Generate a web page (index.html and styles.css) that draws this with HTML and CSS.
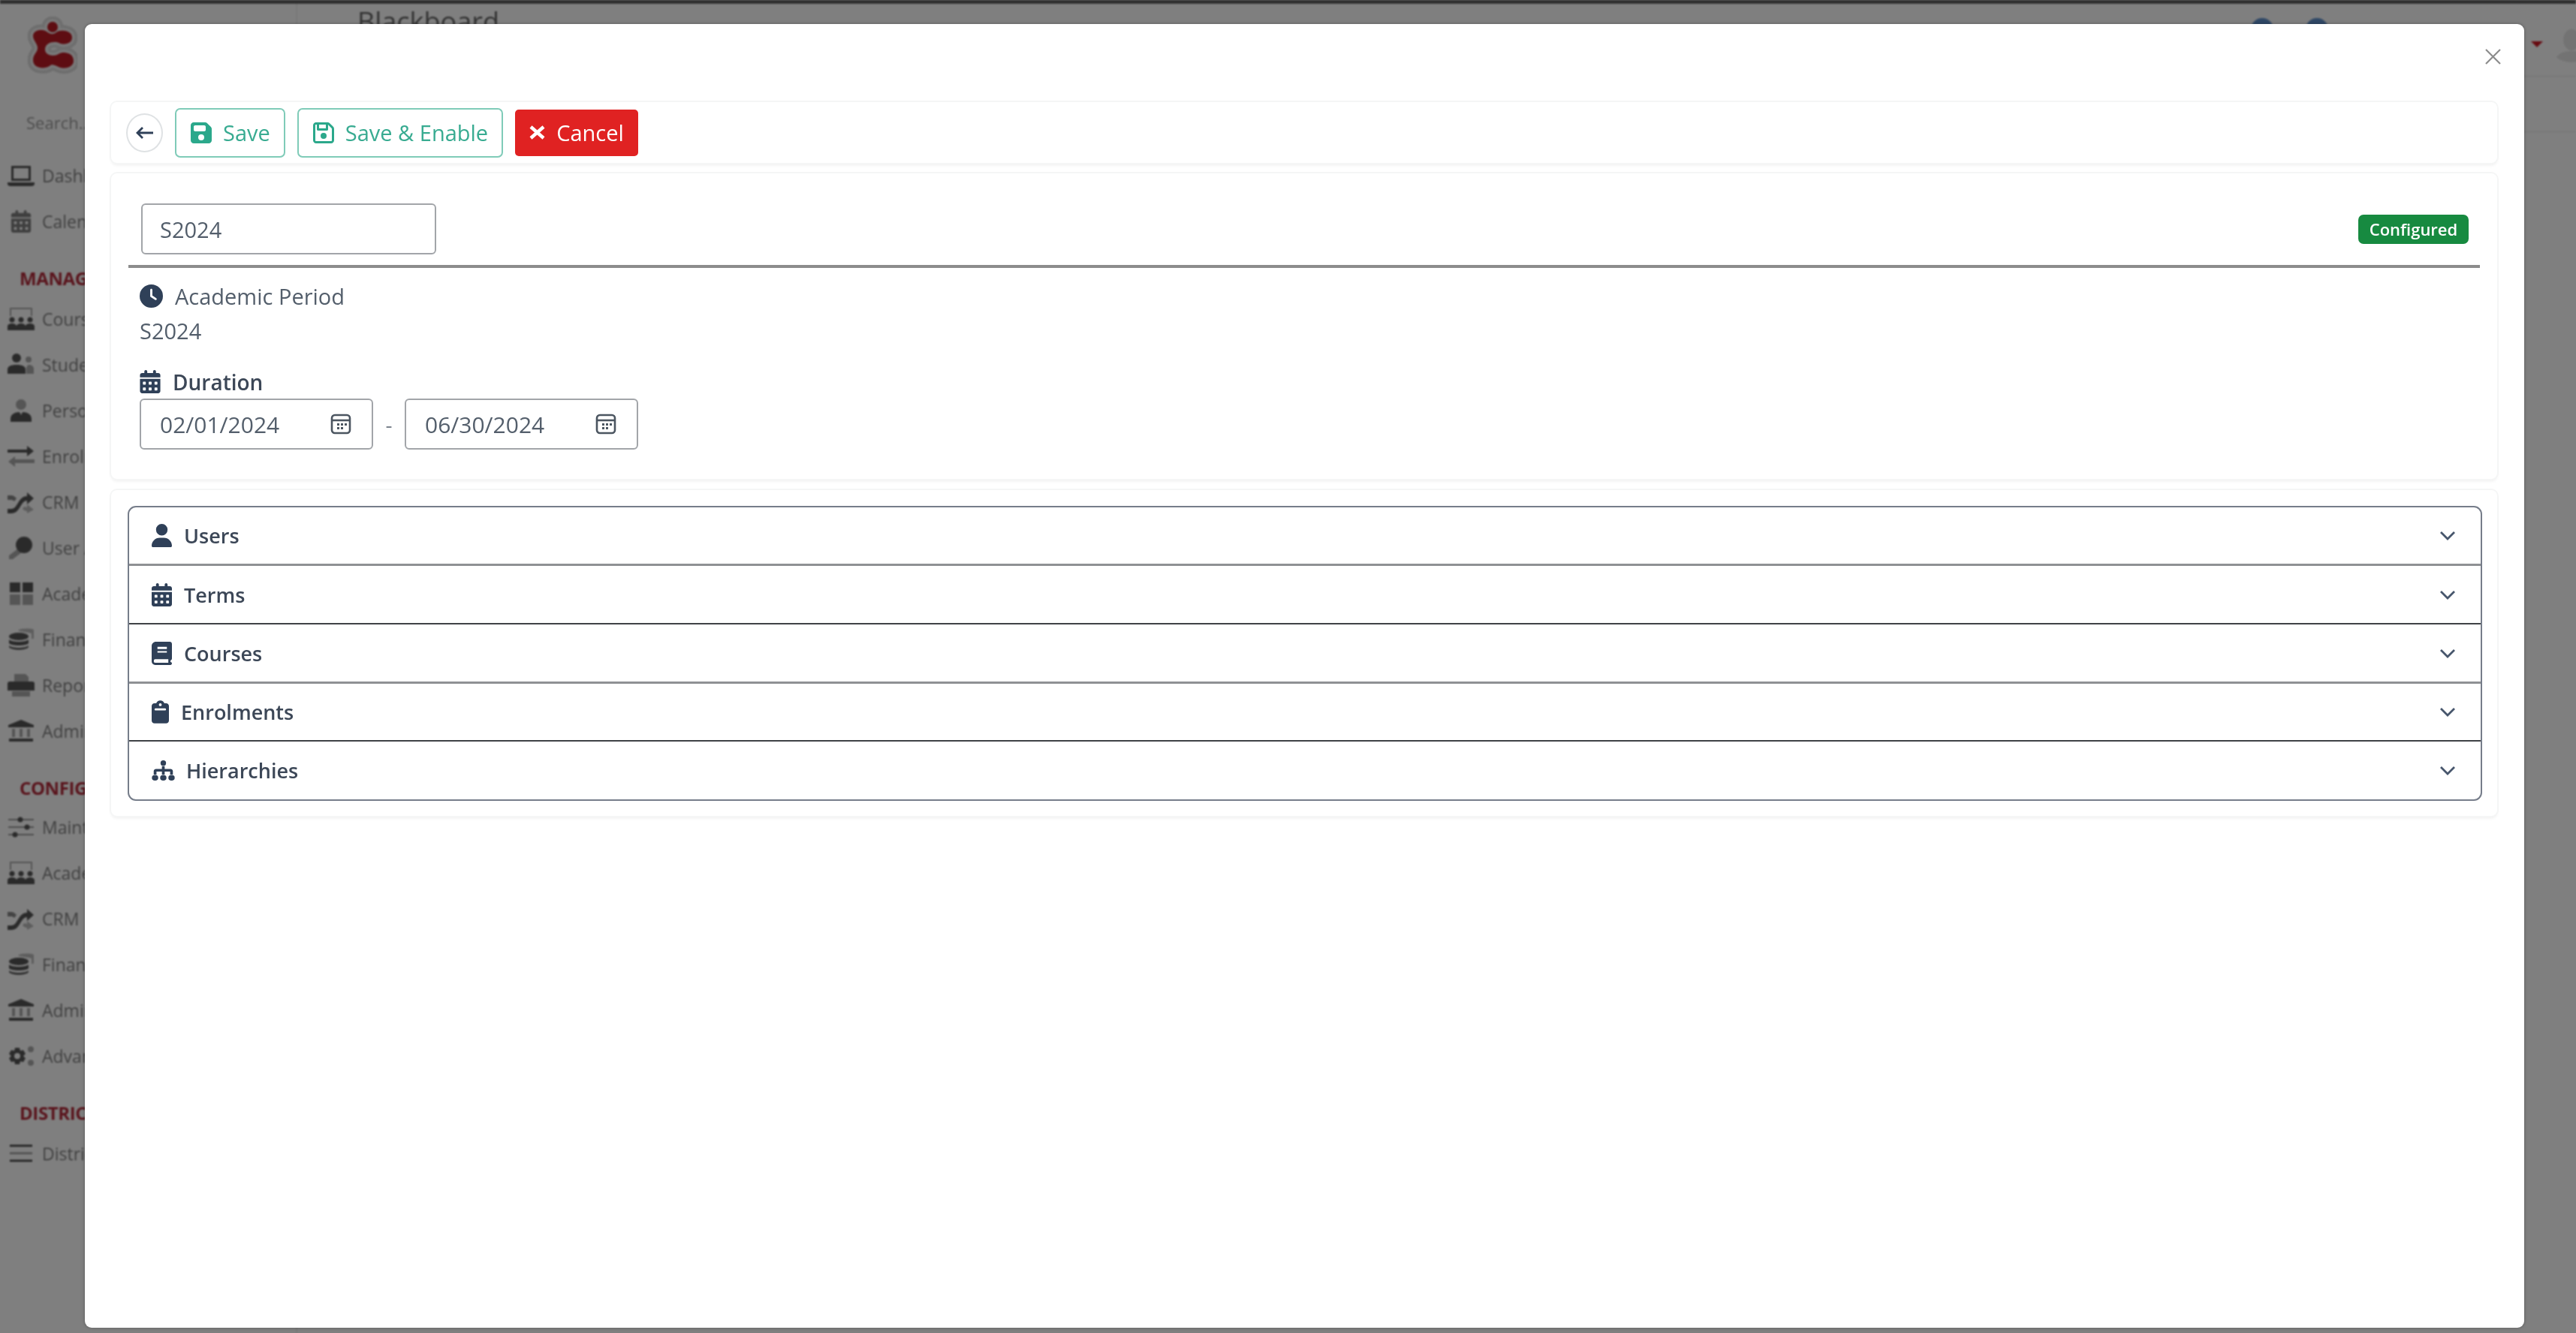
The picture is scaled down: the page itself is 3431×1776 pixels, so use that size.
FILE: index.html
```html
<!DOCTYPE html>
<html lang="en">
<head>
<meta charset="utf-8">
<title>Blackboard – Academic Period</title>
<link rel="stylesheet" href="styles.css">
</head>
<body>
<svg class="defs" aria-hidden="true">
  <symbol id="i-save" viewBox="0 0 448 512"><path d="M64 32C28.7 32 0 60.7 0 96V416c0 35.3 28.7 64 64 64H384c35.3 0 64-28.7 64-64V173.3c0-17-6.7-33.3-18.7-45.3L352 50.7C340 38.7 323.7 32 306.7 32H64zm0 96c0-17.7 14.3-32 32-32H288c17.7 0 32 14.3 32 32v64c0 17.7-14.3 32-32 32H96c-17.7 0-32-14.3-32-32V128zM224 288a64 64 0 1 1 0 128 64 64 0 1 1 0-128z"/></symbol>
  <symbol id="i-save-o" viewBox="0 0 448 512"><path d="M48 96V416c0 8.800 7.200 16 16 16H384c8.800 0 16-7.200 16-16V170.500c0-4.200-1.700-8.300-4.700-11.300l33.900-33.900c12 12 18.700 28.300 18.700 45.300V416c0 35.300-28.700 64-64 64H64c-35.300 0-64-28.700-64-64V96C0 60.700 28.700 32 64 32H309.500c17 0 33.300 6.700 45.300 18.700l74.500 74.500-33.900 33.900L320.800 84.700c-.3-.3-.5-.5-.8-.8V184c0 13.300-10.700 24-24 24H104c-13.300 0-24-10.700-24-24V80H64c-8.800 0-16 7.200-16 16zm80-16v80H272V80H128zm32 240a64 64 0 1 1 128 0 64 64 0 1 1-128 0z"/></symbol>
  <symbol id="i-clock" viewBox="0 0 512 512"><path fill-rule="evenodd" d="M256 512A256 256 0 1 0 256 0a256 256 0 1 0 0 512zM232 120V256c0 8 4 15.500 10.700 20l96 64c11 7.400 25.900 4.400 33.300-6.700s4.400-25.900-6.700-33.300L280 243.200V120c0-13.300-10.700-24-24-24s-24 10.700-24 24z"/></symbol>
  <symbol id="i-user" viewBox="0 0 448 512"><path d="M224 256A128 128 0 1 0 224 0a128 128 0 1 0 0 256zm-45.700 48C79.800 304 0 383.800 0 482.300C0 498.700 13.300 512 29.700 512H418.300c16.400 0 29.700-13.300 29.700-29.700C448 383.800 368.200 304 269.700 304H178.300z"/></symbol>
  <symbol id="i-cal" viewBox="0 0 448 512"><path d="M128 0c17.700 0 32 14.300 32 32V64H288V32c0-17.700 14.300-32 32-32s32 14.300 32 32V64h48c26.500 0 48 21.500 48 48v48H0V112C0 85.500 21.500 64 48 64H96V32c0-17.700 14.300-32 32-32zM0 192H448V464c0 26.500-21.500 48-48 48H48c-26.500 0-48-21.500-48-48V192zm64 80v32c0 8.800 7.200 16 16 16h32c8.800 0 16-7.200 16-16V272c0-8.800-7.200-16-16-16H80c-8.800 0-16 7.200-16 16zm128 0v32c0 8.800 7.200 16 16 16h32c8.800 0 16-7.200 16-16V272c0-8.800-7.200-16-16-16H208c-8.800 0-16 7.200-16 16zm144-16c-8.800 0-16 7.200-16 16v32c0 8.800 7.200 16 16 16h32c8.800 0 16-7.200 16-16V272c0-8.800-7.200-16-16-16H336zM64 400v32c0 8.800 7.200 16 16 16h32c8.800 0 16-7.200 16-16V400c0-8.800-7.200-16-16-16H80c-8.800 0-16 7.200-16 16zm144-16c-8.800 0-16 7.200-16 16v32c0 8.800 7.200 16 16 16h32c8.800 0 16-7.200 16-16V400c0-8.800-7.200-16-16-16H208zm112 16v32c0 8.800 7.200 16 16 16h32c8.800 0 16-7.200 16-16V400c0-8.800-7.200-16-16-16H336c-8.800 0-16 7.200-16 16z"/></symbol>
  <symbol id="i-book" viewBox="0 0 448 512"><path fill-rule="evenodd" d="M96 0H400c26.500 0 48 21.500 48 48V368c0 20.900-13.400 38.700-32 45.300V448c17.700 0 32 14.300 32 32s-14.300 32-32 32H80c-44.200 0-80-35.800-80-80V96C0 43 43 0 96 0zM80 384c-26.500 0-32 21.500-32 48s5.500 32 32 32H368V384H80zM128 112v48h208v-48H128zm0 96v32h208v-32H128z"/></symbol>
  <symbol id="i-clip" viewBox="0 0 384 512"><path fill-rule="evenodd" d="M192 0c-41.800 0-77.400 26.700-90.500 64H64C28.700 64 0 92.700 0 128V448c0 35.300 28.700 64 64 64H320c35.300 0 64-28.700 64-64V128c0-35.300-28.700-64-64-64H282.500C269.400 26.700 233.800 0 192 0zM192 64a32 32 0 1 1 0 64 32 32 0 1 1 0-64zM88 176H296c13 0 24 11 24 24s-11 24-24 24H88c-13 0-24-11-24-24s11-24 24-24z"/></symbol>
  <symbol id="i-tree" viewBox="0 0 576 512"><path d="M288 0a70 70 0 1 1 0 140 70 70 0 1 1 0-140zM253 150h70v66H470c30 0 60 25 60 55v90h-70v-75H323v75h-70v-75H116v75H46v-90c0-30 30-55 60-55H253zM80 370a80 71 0 1 1 0 142 80 71 0 1 1 0-142zm208 0a80 71 0 1 1 0 142 80 71 0 1 1 0-142zm208 0a80 71 0 1 1 0 142 80 71 0 1 1 0-142z"/></symbol>
  <symbol id="i-laptop" viewBox="0 0 36 30"><path d="M5 2h26v20H5zM8 5v14h20V5z" fill-rule="evenodd"/><path d="M0 24h36v2c0 2-2 3-4 3H4c-2 0-4-1-4-3z"/></symbol>
  <symbol id="i-class" viewBox="0 0 36 30"><path d="M3 0h30v11h-2V2H5v9H3z" opacity=".5"/><circle cx="6" cy="16" r="3.500"/><circle cx="18" cy="16" r="3.500"/><circle cx="30" cy="16" r="3.500"/><path d="M0 30v-5c0-3 3-4 6-4s6 1 6 4v5zM12 30v-5c0-3 3-4 6-4s6 1 6 4v5zM24 30v-5c0-3 3-4 6-4s6 1 6 4v5z"/></symbol>
  <symbol id="i-students" viewBox="0 0 36 30"><circle cx="12" cy="6" r="6"/><path d="M0 27v-6c0-4 5-6 12-6s12 2 12 6v6z"/><circle cx="28" cy="8" r="4" opacity=".5"/><path d="M25 27v-7c0-3 2-5 4-5s6 2 6 5v7z" opacity=".5"/></symbol>
  <symbol id="i-person" viewBox="0 0 36 30"><circle cx="18" cy="7" r="7" opacity=".5"/><path d="M4 30v-4c0-6 6-9 12-9l2 4 2-4c6 0 12 3 12 9v4z"/></symbol>
  <symbol id="i-swap" viewBox="0 0 36 30"><path d="M0 9h26V4l9 7-9 7v-5H0z" transform="translate(0 -3)"/><path d="M36 19H10v-4l-9 7 9 7v-5h26z" opacity=".5"/></symbol>
  <symbol id="i-cross" viewBox="0 0 36 30"><path d="M0 24h5c4 0 6-3 9-8s6-9 12-9V2l9 8-9 8v-5c-4 0-6 3-9 8s-6 9-12 9H0z"/><path d="M0 6h5c3 0 5 2 7 4l-3 4c-1-1-2-2-4-2H0z" opacity=".7"/><path d="M22 21l4 1v-4l9 7-9 5v-3c-2 0-4-1-6-3z" opacity=".4"/></symbol>
  <symbol id="i-key" viewBox="0 0 36 30"><circle cx="22" cy="11" r="11"/><path d="M14 16l5 5L7 30H2v-5z" opacity=".5"/></symbol>
  <symbol id="i-grid" viewBox="0 0 36 30"><path d="M3 0h14v13H3zM20 0h14v13H20z"/><path d="M3 16h14v14H3zM20 16h14v14H20z" opacity=".5"/></symbol>
  <symbol id="i-coins" viewBox="0 0 36 30"><ellipse cx="15" cy="11" rx="13" ry="5"/><path d="M2 15c3 4 23 4 26 0v5c-3 4-23 4-26 0z"/><path d="M2 23c3 4 23 4 26 0v2c-3 5-23 5-26 0z"/><path d="M14 3c2-3 18-3 21-1v12h-3V7c-5-2-14-2-18-4z" opacity=".4"/></symbol>
  <symbol id="i-printer" viewBox="0 0 36 30"><path d="M9 0h15l4 4v6H9z" opacity=".5"/><path d="M3 10h30c2 0 3 1 3 3v9H0v-9c0-2 1-3 3-3z"/><path d="M6 23h24v7H6z" opacity=".5"/></symbol>
  <symbol id="i-bank" viewBox="0 0 36 30"><path d="M18 0l17 7v3H1V7z"/><path d="M6 12h4v11H6zM16 12h4v11h-4zM26 12h4v11h-4z" opacity=".5"/><path d="M2 25h32v4H2z"/></symbol>
  <symbol id="i-sliders" viewBox="0 0 36 30"><path d="M1 4h34v2H1zM1 14h34v2H1zM1 24h34v2H1z" opacity=".6"/><circle cx="17" cy="5" r="3.500"/><circle cx="26" cy="15" r="3.500"/><circle cx="10" cy="25" r="3.500"/></symbol>
  <symbol id="i-gears" viewBox="0 0 36 30"><path fill-rule="evenodd" d="M10 4h6l1 4 4-1 3 5-3 3 3 3-3 5-4-1-1 4h-6l-1-4-4 1-3-5 3-3-3-3 3-5 4 1zM13 11a4 4 0 1 0 0 8 4 4 0 0 0 0-8z"/><circle cx="31" cy="6" r="4" opacity=".5"/><circle cx="31" cy="24" r="4" opacity=".5"/></symbol>
  <symbol id="i-bars" viewBox="0 0 36 30"><path d="M3 3h30v3H3zM3 23h30v3H3z"/><path d="M3 13h30v3H3z" opacity=".5"/></symbol>
  <symbol id="i-blob" viewBox="37 22 66 78"><circle cx="70" cy="36" r="7"/><path d="M44 48C44 40 56 38 62 42C66 45 70 47 75 43C80 39 96 40 96 50C96 58 86 60 80 58C74 54 60 56 60 66C60 74 72 76 78 72C84 68 98 70 98 81C98 90 86 92 80 90C74 88 70 84 66 88C60 92 44 92 44 80C44 72 50 70 50 64C50 58 44 54 44 48Z"/></symbol>
</svg>

<div class="app">
  <aside class="sidebar">
    <div class="logo-wrap">
      <svg class="logo logo-ring"><use href="#i-blob"/></svg>
      <svg class="logo logo-gap"><use href="#i-blob"/></svg>
      <svg class="logo logo-mark"><use href="#i-blob"/></svg>
    </div>
    <div class="search">Search...</div>
    <nav class="nav">
      <a class="nav-row"><svg class="nav-icon"><use href="#i-laptop"/></svg><span>Dashboard</span></a>
      <a class="nav-row"><svg class="nav-icon nav-icon--cal"><use href="#i-cal"/></svg><span>Calendar</span></a>
      <div class="nav-head">MANAGEMENT</div>
      <a class="nav-row"><svg class="nav-icon"><use href="#i-class"/></svg><span>Courses</span></a>
      <a class="nav-row"><svg class="nav-icon"><use href="#i-students"/></svg><span>Students</span></a>
      <a class="nav-row"><svg class="nav-icon"><use href="#i-person"/></svg><span>Personnel</span></a>
      <a class="nav-row"><svg class="nav-icon"><use href="#i-swap"/></svg><span>Enrolment</span></a>
      <a class="nav-row"><svg class="nav-icon"><use href="#i-cross"/></svg><span>CRM</span></a>
      <a class="nav-row"><svg class="nav-icon"><use href="#i-key"/></svg><span>User Access</span></a>
      <a class="nav-row"><svg class="nav-icon"><use href="#i-grid"/></svg><span>Academics</span></a>
      <a class="nav-row"><svg class="nav-icon"><use href="#i-coins"/></svg><span>Financials</span></a>
      <a class="nav-row"><svg class="nav-icon"><use href="#i-printer"/></svg><span>Reports</span></a>
      <a class="nav-row"><svg class="nav-icon"><use href="#i-bank"/></svg><span>Administration</span></a>
      <div class="nav-head nav-head--config">CONFIGURATION</div>
      <a class="nav-row"><svg class="nav-icon"><use href="#i-sliders"/></svg><span>Maintenance</span></a>
      <a class="nav-row"><svg class="nav-icon"><use href="#i-class"/></svg><span>Academics</span></a>
      <a class="nav-row"><svg class="nav-icon"><use href="#i-cross"/></svg><span>CRM</span></a>
      <a class="nav-row"><svg class="nav-icon"><use href="#i-coins"/></svg><span>Financials</span></a>
      <a class="nav-row"><svg class="nav-icon"><use href="#i-bank"/></svg><span>Administration</span></a>
      <a class="nav-row"><svg class="nav-icon"><use href="#i-gears"/></svg><span>Advanced</span></a>
      <div class="nav-head">DISTRICT</div>
      <a class="nav-row"><svg class="nav-icon"><use href="#i-bars"/></svg><span>Districts</span></a>
    </nav>
  </aside>
  <div class="main">
    <header class="topbar">
      <div class="brand">Blackboard</div>
      <div class="top-tools">
        <span class="dot"></span>
        <span class="dot"></span>
        <span class="caret"></span>
        <span class="avatar"><svg class="avatar-icon" viewBox="0 0 60 60"><ellipse cx="30" cy="24" rx="13" ry="17"/><path d="M4 60c0-14 14-18 26-18s26 4 26 18z"/></svg></span>
      </div>
    </header>
    <div class="subbar"></div>
  </div>
</div>

<div class="backdrop"></div>

<section class="modal">
  <svg class="close" viewBox="0 0 21 21" aria-label="Close"><path d="M1 1l19 19M20 1L1 20"/></svg>

  <div class="card toolbar">
    <button class="back" type="button">
      <svg class="back-icon" viewBox="0 0 24 18"><path d="M23 9H2M9 2L2 9l7 7"/></svg>
    </button>
    <button class="btn btn--outline" type="button"><svg class="btn-icon"><use href="#i-save"/></svg>Save</button>
    <button class="btn btn--outline" type="button"><svg class="btn-icon"><use href="#i-save-o"/></svg>Save &amp; Enable</button>
    <button class="btn btn--danger" type="button">
      <svg class="x-icon" viewBox="0 0 23 19"><path d="M3 2l17 15M20 2L3 17"/></svg>Cancel
    </button>
  </div>

  <div class="card detail">
    <div class="detail-head">
      <div class="field field--name">S2024</div>
      <span class="badge">Configured</span>
    </div>
    <div class="detail-body">
      <div class="label-row">
        <svg class="icon icon--clock"><use href="#i-clock"/></svg>
        <span>Academic Period</span>
      </div>
      <div class="value">S2024</div>
      <div class="label-row label-row--strong">
        <svg class="icon icon--cal"><use href="#i-cal"/></svg>
        <span>Duration</span>
      </div>
      <div class="dates">
        <div class="field field--date">
          <span>02/01/2024</span>
          <svg class="date-icon" viewBox="0 0 28 28"><rect x="2" y="2" width="24" height="24" rx="4"/><path d="M2 9h24"/><path class="date-dots" d="M9 13h3v3H9zM14 13h3v3h-3zM19 13h3v3h-3zM9 18h3v3H9zM14 18h3v3h-3z"/></svg>
        </div>
        <span class="dash">-</span>
        <div class="field field--date">
          <span>06/30/2024</span>
          <svg class="date-icon" viewBox="0 0 28 28"><rect x="2" y="2" width="24" height="24" rx="4"/><path d="M2 9h24"/><path class="date-dots" d="M9 13h3v3H9zM14 13h3v3h-3zM19 13h3v3h-3zM9 18h3v3H9zM14 18h3v3h-3z"/></svg>
        </div>
      </div>
    </div>
  </div>

  <div class="card sections">
    <div class="accordion">
      <div class="acc-row acc-row--light">
        <svg class="acc-icon"><use href="#i-user"/></svg><span class="acc-title">Users</span>
        <svg class="chev" viewBox="0 0 22 13"><path d="M2 2l9 9 9-9"/></svg>
      </div>
      <div class="acc-row acc-row--dark">
        <svg class="acc-icon"><use href="#i-cal"/></svg><span class="acc-title">Terms</span>
        <svg class="chev" viewBox="0 0 22 13"><path d="M2 2l9 9 9-9"/></svg>
      </div>
      <div class="acc-row acc-row--light acc-row--tall">
        <svg class="acc-icon"><use href="#i-book"/></svg><span class="acc-title">Courses</span>
        <svg class="chev" viewBox="0 0 22 13"><path d="M2 2l9 9 9-9"/></svg>
      </div>
      <div class="acc-row acc-row--dark acc-row--short">
        <svg class="acc-icon acc-icon--clip"><use href="#i-clip"/></svg><span class="acc-title">Enrolments</span>
        <svg class="chev" viewBox="0 0 22 13"><path d="M2 2l9 9 9-9"/></svg>
      </div>
      <div class="acc-row acc-row--last">
        <svg class="acc-icon acc-icon--tree"><use href="#i-tree"/></svg><span class="acc-title">Hierarchies</span>
        <svg class="chev" viewBox="0 0 22 13"><path d="M2 2l9 9 9-9"/></svg>
      </div>
    </div>
  </div>
</section>
</body>
</html>
```

FILE: styles.css
```css
* { box-sizing: border-box; }
html, body { margin: 0; height: 100%; }
body {
  position: relative;
  height: 1776px;
  overflow: hidden;
  background: #fff;
  font-family: "Open Sans", "Noto Sans", sans-serif;
  color: #3c4757;
}
.defs { position: absolute; width: 0; height: 0; }

/* Dimmed application behind the dialog */
.app {
  display: flex;
  height: 1776px;
  border-top: 5px solid #5c5c5c;
  filter: blur(1.300px);
}
.sidebar {
  width: 396px;
  flex: none;
  border-right: 2px solid #f0f0f0;
  padding-top: 17px;
  color: #808080;
}
.logo-wrap { position: relative; height: 78px; margin-left: 37px; width: 66px; }
.logo { position: absolute; inset: 0; width: 66px; height: 78px; overflow: visible; }
.logo-ring { fill: #dcdcdc; stroke: #dcdcdc; stroke-width: 15px; stroke-linejoin: round; }
.logo-gap { fill: #f2f2f2; stroke: #f2f2f2; stroke-width: 7px; stroke-linejoin: round; }
.logo-mark { fill: #bc1a24; }
.search {
  height: 30px;
  margin-top: 48px;
  padding-left: 35px;
  font-size: 22px;
  line-height: 30px;
  color: #999;
}
.nav { margin-top: 25px; }
.nav-row {
  display: flex;
  align-items: center;
  height: 61px;
  padding-left: 10px;
  font-size: 23px;
  white-space: nowrap;
}
.nav-icon {
  width: 36px;
  height: 30px;
  margin-right: 10px;
  fill: #555;
  flex: none;
}
.nav-icon--cal { opacity: .75; }
.nav-head {
  height: 69px;
  padding: 31px 0 0 26px;
  font-size: 24px;
  line-height: 30px;
  font-weight: 700;
  color: #b42a3a;
  letter-spacing: -.4px;
}
.nav-head--config { height: 67px; padding-top: 31px; }

.main { flex: 1; min-width: 0; }
.topbar {
  display: flex;
  justify-content: space-between;
  height: 97px;
  border-bottom: 1px solid #e8e8e8;
  padding-left: 80px;
}
.brand {
  font-size: 36px;
  line-height: 46px;
  margin-top: 1px;
  color: #666;
}
.top-tools { display: flex; align-items: flex-start; }
.dot {
  width: 30px;
  height: 30px;
  margin-top: 19px;
  margin-right: 43px;
  border-radius: 50%;
  background: #5f90cc;
}
.caret {
  width: 0;
  height: 0;
  margin: 50px 0 0 227px;
  border-left: 8px solid transparent;
  border-right: 8px solid transparent;
  border-top: 8px solid #cf1622;
}
.avatar {
  width: 60px;
  height: 50px;
  margin: 28px -24px 0 8px;
  border-radius: 50%;
  background: #fff;
  overflow: hidden;
}
.avatar-icon { display: block; width: 60px; height: 50px; fill: #e6e6e6; }
.subbar { height: 74px; border-bottom: 1px solid #e8e8e8; }

.backdrop {
  position: absolute;
  inset: 0;
  background: rgba(0, 0, 0, .5);
}

/* Dialog */
.modal {
  position: absolute;
  left: 113px;
  top: 32px;
  width: 3249px;
  height: 1737px;
  padding: 104px 36px 0 35px;
  display: flex;
  flex-direction: column;
  gap: 14px;
  background: #fff;
  border-radius: 9px;
  box-shadow: 0 0 4px rgba(0, 0, 0, .3);
  filter: blur(.5px);
}
.close {
  position: absolute;
  top: 33px;
  right: 31px;
  width: 21px;
  height: 21px;
  fill: none;
  stroke: #8c8c8c;
  stroke-width: 2.200;
}
.card {
  background: #fff;
  border-radius: 8px;
  box-shadow: 0 0 0 2px #f5f6f6, 0 3px 4px rgba(0, 0, 0, .07);
}

/* Toolbar */
.toolbar {
  display: flex;
  align-items: center;
  gap: 16px;
  height: 81px;
  padding-left: 20px;
}
.back {
  display: flex;
  align-items: center;
  justify-content: center;
  width: 49px;
  height: 52px;
  padding: 0;
  background: #fff;
  border: 2px solid #dfe2e4;
  border-radius: 50%;
}
.back-icon {
  width: 24px;
  height: 18px;
  fill: none;
  stroke: #2f4058;
  stroke-width: 2.800;
}
.btn {
  display: flex;
  align-items: center;
  font: 400 29px/1 "Open Sans", "Noto Sans", sans-serif;
  white-space: nowrap;
}
.btn--outline {
  height: 66px;
  padding: 0 18px 0 19px;
  gap: 15px;
  color: #38ab91;
  background: #fff;
  border: 2px solid #7fcbb8;
  border-radius: 7px;
}
.btn-icon { width: 28px; height: 32px; fill: #2ba88b; }
.btn--danger {
  height: 62px;
  padding: 0 19px 0 18px;
  gap: 14px;
  color: #fff;
  background: #e02222;
  border: 0;
  border-radius: 5px;
}
.x-icon {
  width: 23px;
  height: 19px;
  fill: none;
  stroke: #fff;
  stroke-width: 4.500;
}

/* Detail card */
.detail { height: 407px; padding: 40px 23px 0; }
.detail-head {
  display: flex;
  align-items: center;
  justify-content: space-between;
  padding: 0 15px 14px 17px;
  border-bottom: 4px solid #8c8c8c;
}
.field {
  display: flex;
  align-items: center;
  height: 68px;
  border: 2px solid #a2a5a9;
  border-radius: 6px;
  color: #535e6b;
  background: #fff;
}
.field--name { width: 393px; padding-left: 23px; font-size: 29px; }
.badge {
  display: flex;
  align-items: center;
  justify-content: center;
  width: 147px;
  height: 39px;
  border-radius: 7px;
  background: #178a40;
  color: #fff;
  font-size: 22px;
  font-weight: 600;
}
.detail-body { padding: 22px 0 0 15px; }
.label-row {
  display: flex;
  align-items: center;
  height: 31px;
  font-size: 29px;
  color: #535e6b;
}
.icon { height: 31px; fill: #2f4058; flex: none; }
.icon--clock { width: 31px; margin-right: 16px; }
.icon--cal { width: 28px; margin-right: 16px; }
.label-row--strong {
  margin-top: 36px;
  font-size: 28px;
  font-weight: 600;
  color: #3c4757;
}
.value {
  height: 32px;
  margin-top: 15px;
  font-size: 29px;
  line-height: 32px;
  color: #535e6b;
}
.dates { display: flex; align-items: center; margin-top: 7px; }
.field--date {
  justify-content: space-between;
  width: 311px;
  padding: 0 27px 0 25px;
  font-size: 30px;
}
.date-icon { width: 28px; height: 28px; fill: none; stroke: #4b5560; stroke-width: 2.600; }
.date-dots { fill: #4b5560; stroke: none; }
.dash { width: 42px; text-align: center; font-size: 28px; color: #7a828c; }

/* Accordion card */
.sections { height: 434px; padding: 21px 20px 0 22px; margin-top: 1px; }
.accordion {
  border: 2px solid #767d8a;
  border-radius: 11px;
}
.acc-row {
  display: flex;
  align-items: center;
  height: 78px;
  padding: 0 33px 0 30px;
  font-size: 27px;
  font-weight: 600;
  color: #3c4757;
}
.acc-row--light { border-bottom: 3px solid #8f9194; }
.acc-row--dark { border-bottom: 2px solid #3f4246; }
.acc-row--tall { height: 79px; }
.acc-row--short { height: 77px; }
.acc-row--last { height: 77px; }
.acc-icon { width: 27px; height: 31px; margin-right: 16px; fill: #2f4058; flex: none; }
.acc-icon--clip { width: 23px; margin-right: 16px; }
.acc-icon--tree { width: 31px; height: 27px; margin-right: 15px; }
.acc-title { flex: 1; }
.chev {
  width: 22px;
  height: 13px;
  fill: none;
  stroke: #47566c;
  stroke-width: 2.800;
}
```
